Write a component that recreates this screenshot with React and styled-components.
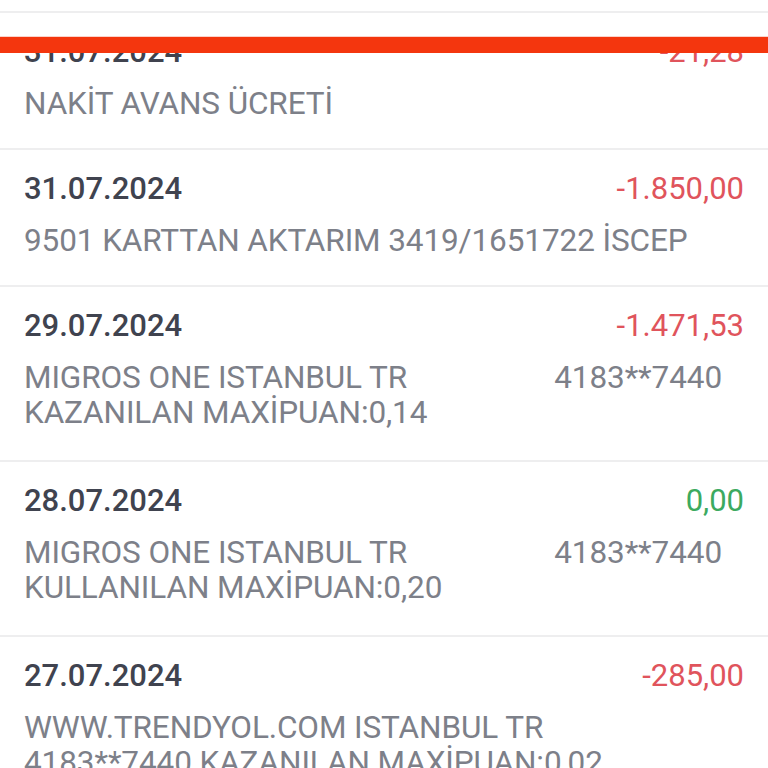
import React from "react";
import styled, { createGlobalStyle } from "styled-components";

const Global = createGlobalStyle`
  html, body { margin: 0; padding: 0; background: #ffffff; }
  body { font-family: Roboto, "Noto Sans", "Liberation Sans", sans-serif; overflow: hidden; }
`;

const Screen = styled.div`
  position: relative;
  width: 768px;
  height: 768px;
  overflow: hidden;
  background: #ffffff;
`;

const List = styled.div`
  display: flex;
  flex-direction: column;
  padding-top: 13px;
`;

const TopRule = styled.div`
  height: 2px;
  background: #eeeeef;
  margin-top: -2px;
`;

const RedBar = styled.div`
  position: absolute;
  left: 0;
  right: 0;
  top: 37px;
  height: 16px;
  background: #f4360e;
  box-shadow: 0 -1px 0 #fbd3cb;
`;

const Row = styled.div`
  display: flex;
  flex-direction: column;
  padding: 21px 24px ${(p) => (p.$tall ? "30px" : "27px")} 24px;
  border-bottom: 2px solid #eeeeef;
`;

const Head = styled.div`
  display: flex;
  justify-content: space-between;
  align-items: center;
  height: 35px;
  margin-bottom: 17px;
`;

const DateText = styled.div`
  font-size: 31px;
  font-weight: 500;
  color: #40434f;
  line-height: 35px;
`;

const Amount = styled.div`
  font-size: 31px;
  font-weight: 400;
  line-height: 35px;
  color: ${(p) => (p.$positive ? "#3caa5f" : "#e0545c")};
`;

const Desc = styled.div`
  display: flex;
  flex-direction: column;
`;

const Line = styled.div`
  display: flex;
  justify-content: space-between;
  font-size: 31.5px;
  line-height: 35px;
  color: #7d8089;
  white-space: nowrap;
  letter-spacing: -0.1px;
`;

const Card = styled.span`
  margin-right: 22px;
`;

const rows = [
  { date: "31.07.2024", amount: "-21,28", lines: [["NAKİT AVANS ÜCRETİ"]] },
  {
    date: "31.07.2024",
    amount: "-1.850,00",
    lines: [["9501 KARTTAN AKTARIM 3419/1651722 İSCEP"]],
  },
  {
    date: "29.07.2024",
    amount: "-1.471,53",
    lines: [["MIGROS ONE ISTANBUL TR", "4183**7440"], ["KAZANILAN MAXİPUAN:0,14"]],
  },
  {
    date: "28.07.2024",
    amount: "0,00",
    positive: true,
    lines: [["MIGROS ONE ISTANBUL TR", "4183**7440"], ["KULLANILAN MAXİPUAN:0,20"]],
  },
  {
    date: "27.07.2024",
    amount: "-285,00",
    lines: [["WWW.TRENDYOL.COM ISTANBUL TR"], ["4183**7440 KAZANILAN MAXİPUAN:0,02"]],
  },
];

export default function App() {
  return (
    <Screen>
      <Global />
      <List>
        <TopRule />
        {rows.map((r, i) => (
          <Row key={i} $tall={r.lines.length > 1}>
            <Head>
              <DateText>{r.date}</DateText>
              <Amount $positive={r.positive}>{r.amount}</Amount>
            </Head>
            <Desc>
              {r.lines.map((l, j) => (
                <Line key={j}>
                  <span>{l[0]}</span>
                  {l[1] && <Card>{l[1]}</Card>}
                </Line>
              ))}
            </Desc>
          </Row>
        ))}
      </List>
      <RedBar />
    </Screen>
  );
}
